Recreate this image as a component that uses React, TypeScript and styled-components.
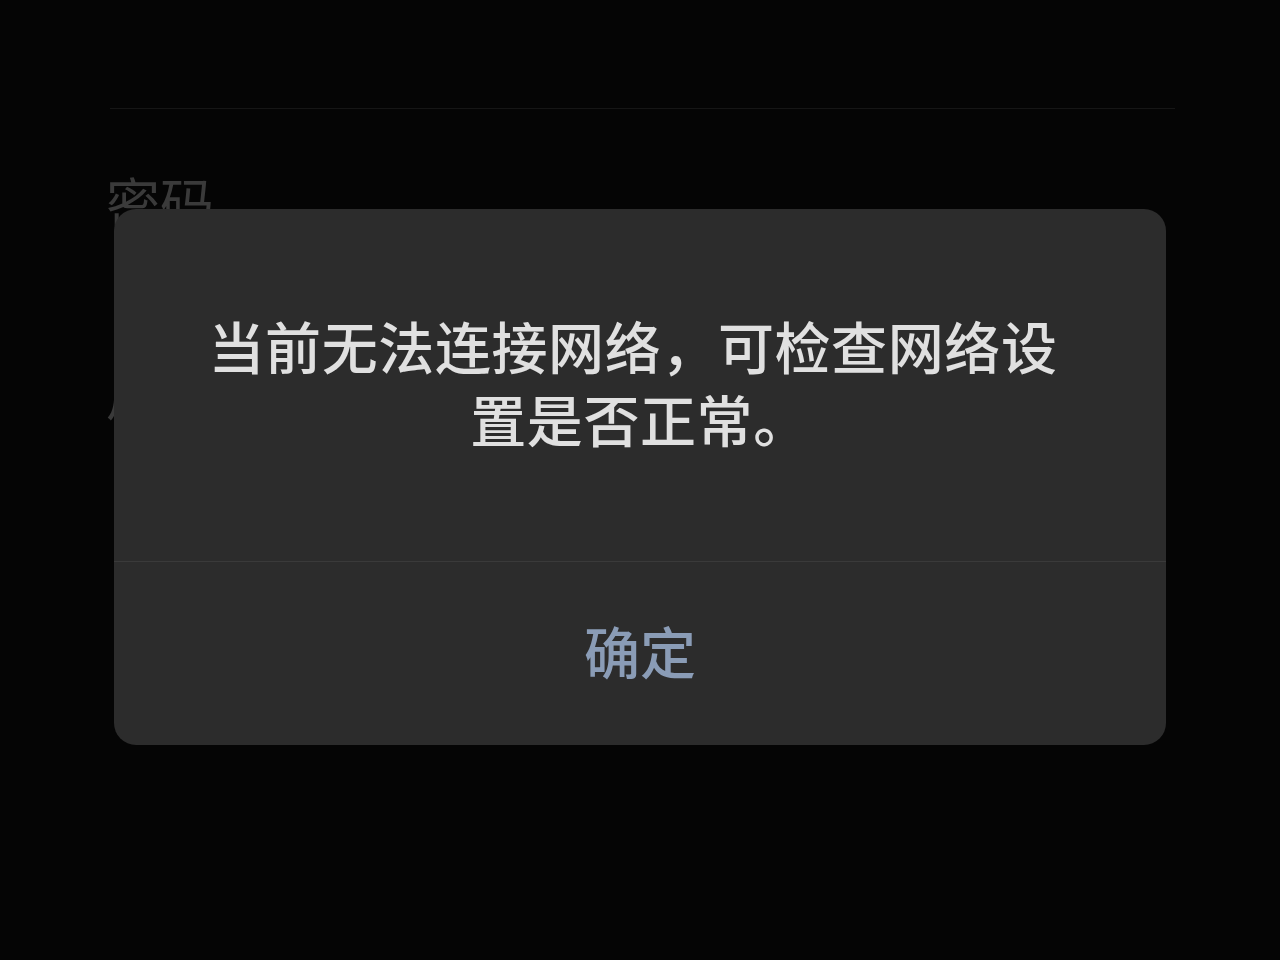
import React from "react";
import styled, { createGlobalStyle } from "styled-components";

const Global = createGlobalStyle`
  html, body { margin: 0; padding: 0; background: #050505; }
  body { font-family: "Noto Sans CJK SC", "Noto Sans", sans-serif; }
`;

const Screen = styled.div`
  position: relative;
  width: 1280px;
  height: 960px;
  overflow: hidden;
  background: #050505;
`;

const Form = styled.div`
  display: flex;
  flex-direction: column;
  padding: 108px 105px 0 110px;
`;

const Divider = styled.div`
  height: 1px;
  background: #161616;
`;

const FieldLabel = styled.div<{ $gap: number }>`
  margin-top: ${(p) => p.$gap}px;
  margin-left: -4px;
  font-size: 54px;
  line-height: 60px;
  color: #3a3a3a;
  font-weight: 400;
`;

const Backdrop = styled.div`
  position: absolute;
  inset: 0;
  display: flex;
  justify-content: center;
  padding-top: 209px;
`;

const Dialog = styled.div`
  width: 1052px;
  height: 536px;
  background: #2c2c2c;
  border-radius: 22px;
  display: flex;
  flex-direction: column;
  overflow: hidden;
`;

const Body = styled.div`
  height: 352px;
  display: flex;
  align-items: center;
  justify-content: center;
  padding: 0 60px;
  border-bottom: 1px solid #3a3a3a;
`;

const Message = styled.div`
  text-align: center;
  font-size: 56px;
  line-height: 73px;
  font-weight: 500;
  letter-spacing: 0.6px;
  color: #e0e0e0;
  margin-top: -8px;
`;

const FirstLine = styled.span`
  display: inline-block;
  margin-left: -14px;
`;

const Action = styled.button`
  flex: 1;
  border: none;
  background: transparent;
  font-family: "Noto Sans CJK SC", "Noto Sans", sans-serif;
  font-size: 56px;
  font-weight: 500;
  color: #8a9cb6;
  display: flex;
  align-items: center;
  justify-content: center;
  padding: 0 0 8px;
  cursor: pointer;
`;

export default function App() {
  return (
    <>
      <Global />
      <Screen>
        <Form>
          <Divider />
          <FieldLabel $gap={62}>密码</FieldLabel>
          <FieldLabel $gap={132}>用户</FieldLabel>
        </Form>
        <Backdrop>
          <Dialog>
            <Body>
              <Message>
                <FirstLine>当前无法连接网络，可检查网络设</FirstLine>
                <br />
                置是否正常。
              </Message>
            </Body>
            <Action>确定</Action>
          </Dialog>
        </Backdrop>
      </Screen>
    </>
  );
}
